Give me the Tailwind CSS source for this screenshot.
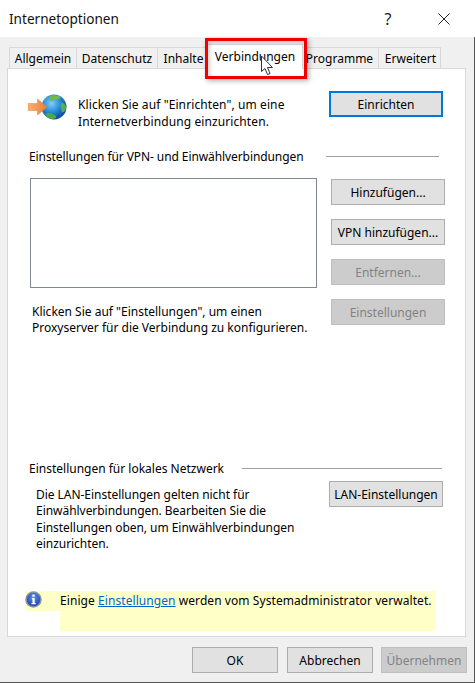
<!DOCTYPE html>
<html lang="de">
<head>
    <meta charset="UTF-8">
    <title>Internetoptionen</title>
    <script src="https://cdn.jsdelivr.net/npm/@tailwindcss/browser@4"></script>
</head>
<body class="m-0 bg-white">
<div class="relative w-[475px] h-[683px] overflow-hidden bg-[#f0f0f0] border-b border-b-[#555] font-['Noto_Sans',sans-serif] text-[12px] leading-[16px] text-black">

    <!-- title bar -->
    <div class="h-[37px] bg-white flex items-center">
        <div class="ml-[9px] text-[13.6px] text-[#111]">Internetoptionen</div>
        <div class="ml-auto w-[12px] text-[16px] text-[#222] text-center">?</div>
        <div class="ml-[44px] mr-[25px] w-[12px] h-[12px]">
            <svg width="12" height="12" viewBox="0 0 12 12"><path d="M0.5 0.5L11.5 11.5M11.5 0.5L0.5 11.5" stroke="#222" stroke-width="1" fill="none"/></svg>
        </div>
    </div>

    <!-- tabs -->
    <div class="flex h-[21px] mt-[10px] ml-[9px]">
        <div class="w-[67px] pt-[1px] flex items-center justify-center border-t border-l border-[#d9d9d9]">Allgemein</div>
        <div class="w-[81px] pt-[1px] flex items-center justify-center border-t border-l border-[#d9d9d9]">Datenschutz</div>
        <div class="w-[50px] pt-[1px] pl-[2px] flex items-center justify-center border-t border-l border-[#d9d9d9]">Inhalte</div>
        <div class="relative z-10 w-[96px] h-[25px] -mt-[3px] flex items-center justify-center bg-white border-t border-x border-[#d9d9d9]">Verbindungen</div>
        <div class="w-[75px] pt-[1px] pr-[2px] flex items-center justify-center border-t border-[#d9d9d9]">Programme</div>
        <div class="w-[63px] pt-[1px] pl-[2px] flex items-center justify-center border-t border-x border-[#d9d9d9]">Erweitert</div>
    </div>

    <!-- tab page -->
    <div class="ml-[7px] w-[459px] h-[569px] bg-white border border-[#d9d9d9] box-border">
        <div class="flex items-start h-[26px] mt-[22px] ml-[20px]">
            <svg class="mt-[3px]" width="40" height="28" viewBox="0 0 40 28">
                <defs>
                    <radialGradient id="globe" cx="40%" cy="35%" r="70%">
                        <stop offset="0%" stop-color="#7fd0f7"/>
                        <stop offset="55%" stop-color="#1f86d6"/>
                        <stop offset="100%" stop-color="#0c3f94"/>
                    </radialGradient>
                    <linearGradient id="arrow" x1="0" y1="0" x2="1" y2="0">
                        <stop offset="0%" stop-color="#f7b27c"/>
                        <stop offset="100%" stop-color="#ee7d2c"/>
                    </linearGradient>
                </defs>
                <circle cx="26" cy="13" r="12.5" fill="url(#globe)"/>
                <path d="M22 2C26 .5 31 1.5 33 3.5C31 6 27 5 25 7C22 8 20 5 22 2Z" fill="#6fb85a"/>
                <path d="M17 20C20 18 25 19 28 22C29 24 26 25.500 23 25C20 24 18 22 17 20Z" fill="#4fa845"/>
                <path d="M33 9C35 8 37 10 38 13C38 16 36 19 34 18C33 15 32 12 33 9Z" fill="#5aae50"/>
                <path d="M0 9.500H9.500V5L19 13L9.500 21V16.500H0Z" fill="url(#arrow)" stroke="#e2813a" stroke-width=".5"/>
            </svg>
            <div class="ml-[10px] w-[250px] pt-[6px] leading-[16.5px] tracking-[0.1px]">Klicken Sie auf "Einrichten", um eine<br>Internetverbindung einzurichten.</div>
            <button class="ml-[1px] w-[114px] h-[26px] pt-[2px] bg-[#e1e1e1] border-2 border-[#0078d7]">Einrichten</button>
        </div>

        <div class="flex items-center mt-[31px] ml-[21px] h-[16px]">
            <span class="w-[297px] pt-[2px] shrink-0 tracking-[-0.09px]">Einstellungen für VPN- und Einwählverbindungen</span>
            <span class="w-[113px] h-px bg-[#a0a0a0]"></span>
        </div>

        <div class="flex items-start mt-[14px] ml-[22px]">
            <div class="w-[301px]">
                <div class="w-[287px] h-[110px] border border-[#828790] bg-white"></div>
                <div class="mt-[16px] ml-[2px]">Klicken Sie auf "Einstellungen", um einen<br>Proxyserver für die Verbindung zu konfigurieren.</div>
            </div>
            <div class="flex flex-col gap-[14px] mt-[1px]">
                <button class="w-[114px] h-[26px] pt-[2px] bg-[#e1e1e1] border border-[#adadad]">Hinzufügen...</button>
                <button class="w-[114px] h-[26px] pt-[2px] bg-[#e1e1e1] border border-[#adadad]">VPN hinzufügen...</button>
                <button class="w-[114px] h-[26px] pt-[2px] bg-[#cccccc] border border-[#bfbfbf] text-[#838383]">Entfernen...</button>
                <button class="w-[114px] h-[26px] pt-[2px] bg-[#cccccc] border border-[#bfbfbf] text-[#838383]">Einstellungen</button>
            </div>
        </div>

        <div class="flex items-center mt-[124px] ml-[21px] h-[16px]">
            <span class="w-[213px] pt-[2px] shrink-0">Einstellungen für lokales Netzwerk</span>
            <span class="w-[200px] h-px bg-[#a0a0a0]"></span>
        </div>

        <div class="flex items-start mt-[5px] ml-[28px]">
            <div class="w-[293px] pt-[6px] leading-[16.33px] tracking-[-0.04px]">
                Die LAN-Einstellungen gelten nicht für<br>Einwählverbindungen. Bearbeiten Sie die<br>Einstellungen oben, um Einwählverbindungen<br>einzurichten.
            </div>
            <button class="w-[114px] h-[26px] pt-[2px] bg-[#e1e1e1] border border-[#adadad]">LAN-Einstellungen</button>
        </div>

        <div class="flex items-start mt-[39px] ml-[17px]">
            <div class="w-[35px] h-[20px] bg-[#ffffc8]">
                <svg width="17" height="17" viewBox="0 0 17 17">
                    <defs>
                        <radialGradient id="info" cx="50%" cy="35%" r="65%">
                            <stop offset="0%" stop-color="#5a8fe8"/>
                            <stop offset="100%" stop-color="#1c3fa8"/>
                        </radialGradient>
                    </defs>
                    <circle cx="8.500" cy="8.500" r="7.500" fill="url(#info)" stroke="#8d94a3" stroke-width="1.500"/>
                    <rect x="7.300" y="3.500" width="2.400" height="2.200" fill="#fff"/>
                    <path d="M6.800 7H9.700V12H10.700V13.200H6.500V12H7.500V8.200H6.800Z" fill="#fff"/>
                </svg>
            </div>
            <div class="w-[375px] h-[40px] bg-[#ffffc8] pt-[2px] tracking-[0.07px]">Einige <span class="text-[#0066cc] underline">Einstellungen</span> werden vom Systemadministrator verwaltet.</div>
        </div>
    </div>

    <!-- footer buttons -->
    <div class="flex mt-[10px] ml-[192px]">
        <button class="w-[86px] h-[26px] pt-[2px] bg-[#e1e1e1] border border-[#adadad]">OK</button>
        <button class="ml-[9px] w-[86px] h-[26px] pt-[2px] bg-[#e1e1e1] border border-[#adadad]">Abbrechen</button>
        <button class="ml-[8px] w-[86px] h-[26px] pt-[2px] bg-[#cccccc] border border-[#bfbfbf] text-[#838383]">Übernehmen</button>
    </div>

    <!-- annotation and cursor over the dialog -->
    <div class="absolute z-20 left-[205px] top-[38px] w-[102px] h-[41px] border-[3px] border-[#f00000] shadow-[2px_2px_5px_rgba(0,0,0,0.3),inset_2px_2px_4px_rgba(0,0,0,0.18)]"></div>
    <svg class="absolute z-30 left-[260px] top-[55px]" width="15" height="21" viewBox="0 0 15 21">
        <path d="M1.500 1V16.500L5 13.500L7.500 19.500L10 18.500L7.500 12.500H12.500Z" fill="#fff" stroke="#333" stroke-width="1"/>
    </svg>

    <div class="absolute right-0 top-[37px] bottom-0 w-px bg-[#555]"></div>
</div>
</body>
</html>
